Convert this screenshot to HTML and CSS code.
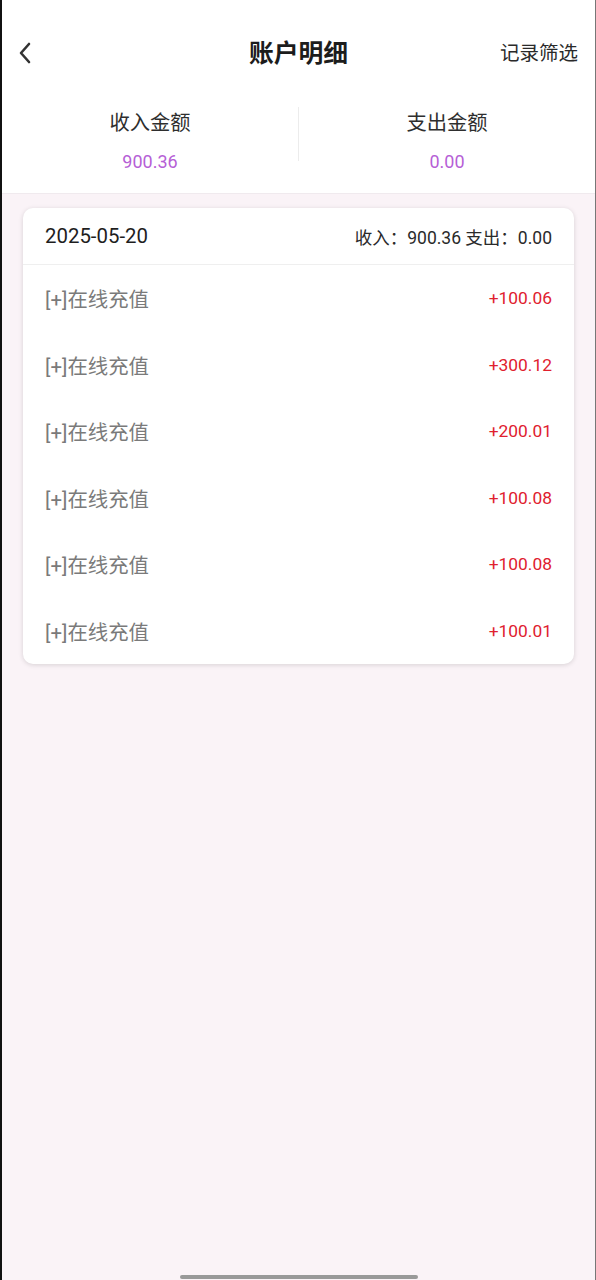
FILE: index.html
```html
<!DOCTYPE html>
<html lang="zh">
<head>
<meta charset="utf-8">
<title>账户明细</title>
<link rel="stylesheet" href="styles.css">
</head>
<body>
<div class="frame">
  <header class="top">
    <div class="status"></div>
    <nav class="nav">
      <span class="back"><svg width="14" height="24" viewBox="0 0 14 24"><path d="M11 3 L3 12 L11 21" fill="none" stroke="#333" stroke-width="2.6" stroke-linecap="round" stroke-linejoin="round"/></svg></span>
      <h1 class="title">账户明细</h1>
      <span class="filter">记录筛选</span>
    </nav>
    <section class="summary">
      <div class="sum-col">
        <div class="sum-label">收入金额</div>
        <div class="sum-value">900.36</div>
      </div>
      <div class="sum-divider"></div>
      <div class="sum-col">
        <div class="sum-label">支出金额</div>
        <div class="sum-value">0.00</div>
      </div>
    </section>
  </header>
  <main class="content">
    <div class="card">
      <div class="card-head">
        <span class="date">2025-05-20</span>
        <span class="totals">收入：900.36 支出：0.00</span>
      </div>
      <div class="row"><span class="desc">[+]在线充值</span><span class="amt">+100.06</span></div>
      <div class="row"><span class="desc">[+]在线充值</span><span class="amt">+300.12</span></div>
      <div class="row"><span class="desc">[+]在线充值</span><span class="amt">+200.01</span></div>
      <div class="row"><span class="desc">[+]在线充值</span><span class="amt">+100.08</span></div>
      <div class="row"><span class="desc">[+]在线充值</span><span class="amt">+100.08</span></div>
      <div class="row"><span class="desc">[+]在线充值</span><span class="amt">+100.01</span></div>
    </div>
  </main>
  <div class="home-bar"></div>
</div>
</body>
</html>
```
FILE: styles.css
```css
* { box-sizing: border-box; }
html, body { margin: 0; padding: 0; }
body {
  font-family: Roboto, "Noto Sans CJK SC", "Noto Sans", sans-serif;
  background: #f9f3f6;
}
.frame {
  height: 1280px;
  border-left: 2px solid #111;
  border-right: 1px solid #777;
  display: flex;
  flex-direction: column;
  background: #faf3f7;
}
.top { background: #fff; border-bottom: 1px solid #f0eaee; }
.status { height: 26px; }
.nav {
  height: 50px;
  display: flex;
  align-items: center;
  justify-content: space-between;
  padding: 0 17px 0 16px;
  position: relative;
}
.back { display: flex; width: 14px; height: 24px; margin-top: 4px; }
.title {
  margin: 0;
  position: absolute;
  left: 0; right: 0;
  text-align: center;
  font-size: 24.8px;
  font-weight: 700;
  color: #1c1c1c;
  pointer-events: none;
}
.filter { font-size: 19.5px; color: #2a2a2a; position: relative; }
.summary {
  height: 117px;
  display: flex;
  align-items: flex-start;
  padding-top: 34px;
}
.sum-col {
  flex: 1;
  display: flex;
  flex-direction: column;
  align-items: center;
  gap: 16px;
}
.sum-label { font-size: 20.3px; color: #2e2e2e; line-height: 26px; }
.sum-value { font-size: 18px; color: #b65fd6; line-height: 20px; }
.sum-divider { width: 1px; height: 54px; margin-top: -3px; background: #ececec; }
.content { flex: 1; padding: 14px 21px 0 21px; }
.card {
  background: #fff;
  border-radius: 10px;
  box-shadow: 0 1px 5px rgba(0,0,0,0.14);
}
.card-head {
  height: 57px;
  display: flex;
  align-items: center;
  justify-content: space-between;
  padding: 0 22px;
  border-bottom: 1px solid #efefef;
}
.date { font-size: 20.4px; color: #1e1e1e; }
.totals { font-size: 17.5px; color: #2a2a2a; }
.row {
  height: 66.5px;
  display: flex;
  align-items: center;
  justify-content: space-between;
  padding: 0 22px;
}
.desc { font-size: 20.4px; color: #7a7a7a; }
.amt { font-size: 17.4px; color: #e0202e; }
.home-bar {
  align-self: center;
  width: 238px;
  height: 4px;
  border-radius: 2px;
  background: #999;
  margin-bottom: 1px;
}
```
